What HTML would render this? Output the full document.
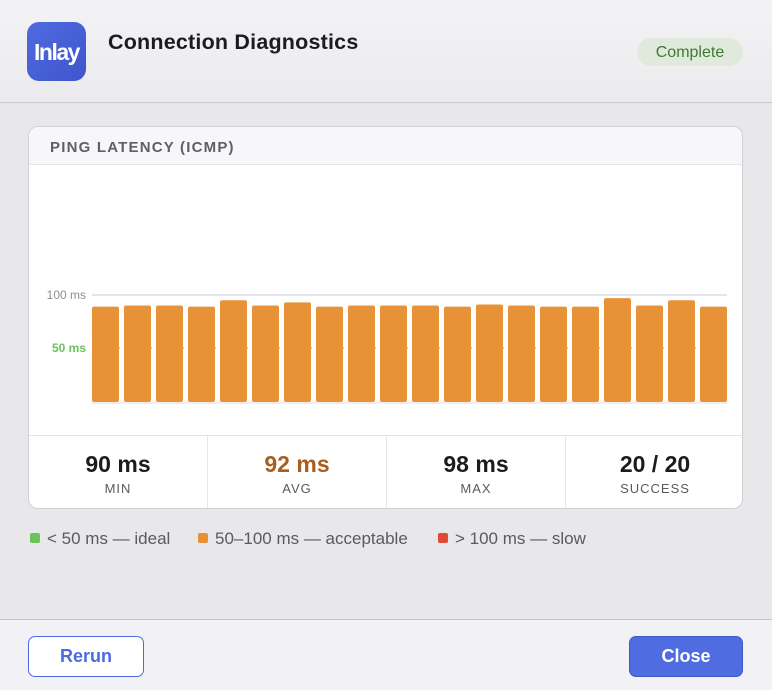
<!DOCTYPE html>
<html><head><style>
*{margin:0;padding:0;box-sizing:border-box}
body{width:772px;height:690px;overflow:hidden;background:#e8e8eb;font-family:"Liberation Sans",sans-serif;position:relative}
.hdr{position:absolute;left:0;top:0;width:772px;height:103px;background:linear-gradient(#f3f3f5,#ebebee);border-bottom:1px solid #c9c9cd}
.icon{position:absolute;left:27px;top:22px;width:59px;height:59px;border-radius:12px;background:linear-gradient(135deg,#4f6ae0,#3f55cc);color:#fff;font-weight:bold;font-size:23px;letter-spacing:-1.5px;line-height:61px;text-align:center}
.title{position:absolute;left:108px;top:30px;font-size:21.5px;font-weight:bold;color:#1c1c1e;letter-spacing:0.2px}
.pill{position:absolute;left:637px;top:38px;width:106px;height:28px;border-radius:14px;background:#dfeadc;color:#3e7a32;font-size:16px;line-height:30px;text-align:center}
.card{position:absolute;left:28px;top:126px;width:715px;height:383px;background:#fff;border:1px solid #cfcfd4;border-radius:10px;overflow:hidden}
.ch{height:38px;background:#f7f7f9;border-bottom:1px solid #e3e3e8;padding-left:21px;line-height:42px;font-size:15px;font-weight:bold;letter-spacing:1.2px;color:#5f5f64}
.stats{position:absolute;left:0;top:308px;width:715px;height:75px;border-top:1px solid #e3e3e8;display:flex}
.st{flex:1;text-align:center;border-right:1px solid #e6e6ea}
.st:last-child{border-right:none}
.v{font-size:23px;font-weight:bold;color:#1c1c1e;margin-top:15px}
.l{font-size:13px;letter-spacing:1px;color:#5a5a5f;margin-top:3px}
.leg{position:absolute;top:529px;font-size:17px;color:#5a5a5f}
.sq{display:inline-block;width:10px;height:10px;border-radius:2px;margin-right:7px;vertical-align:1px}
.ftr{position:absolute;left:0;top:619px;width:772px;height:71px;background:#f2f2f6;border-top:1px solid #c4c4c8}
.btn{position:absolute;top:16px;height:41px;border-radius:7px;font-size:18px;font-weight:bold;text-align:center;line-height:41px}
</style></head><body>
<div class="hdr">
<div class="icon">Inlay</div>
<div class="title">Connection Diagnostics</div>
<div class="pill">Complete</div>
</div>
<div class="card">
<div class="ch">PING LATENCY (ICMP)</div>
<svg style="position:absolute;left:0;top:0" width="715" height="308">
<line x1="63" y1="168" x2="698" y2="168" stroke="#dcdce4" stroke-width="1.5"/>
<line x1="63" y1="221" x2="698" y2="221" stroke="#9fd48f" stroke-width="1.5" stroke-dasharray="4 4"/>
<text x="57" y="172" font-size="12" fill="#8e8e93" text-anchor="end" font-family="Liberation Sans">100 ms</text>
<text x="57" y="225" font-size="12" fill="#6cc35a" text-anchor="end" font-family="Liberation Sans" font-weight="bold">50 ms</text>
<g fill="#e79237" id="bars"></g>
<line x1="63" y1="276" x2="698" y2="276" stroke="#dcdce4"/>
</svg>
<div class="stats">
<div class="st"><div class="v">90 ms</div><div class="l">MIN</div></div>
<div class="st"><div class="v" style="color:#a85e1e">92 ms</div><div class="l">AVG</div></div>
<div class="st"><div class="v">98 ms</div><div class="l">MAX</div></div>
<div class="st"><div class="v">20 / 20</div><div class="l">SUCCESS</div></div>
</div>
</div>
<div class="leg" style="left:30px"><span class="sq" style="background:#6cc35a"></span>&lt; 50 ms — ideal</div>
<div class="leg" style="left:198px"><span class="sq" style="background:#e79237"></span>50–100 ms — acceptable</div>
<div class="leg" style="left:438px"><span class="sq" style="background:#df4b33"></span>&gt; 100 ms — slow</div>
<div class="ftr">
<div class="btn" style="left:28px;width:116px;background:#fff;border:1.5px solid #4d6bdc;color:#4d6bdc;line-height:38px">Rerun</div>
<div class="btn" style="left:629px;width:114px;background:#4f6de0;border:1px solid #3e58c4;color:#fff;line-height:39px">Close</div>
</div>
<script>
var v=[90,91,91,90,96,91,94,90,91,91,91,90,92,91,90,90,98,91,96,90],g=document.getElementById('bars'),s='';
for(var i=0;i<20;i++){var h=v[i]*1.06;s+='<rect x="'+(63+i*32)+'" y="'+(275-h)+'" width="27" height="'+h+'" rx="2"/>';}
g.innerHTML=s;
</script>
</body></html>
